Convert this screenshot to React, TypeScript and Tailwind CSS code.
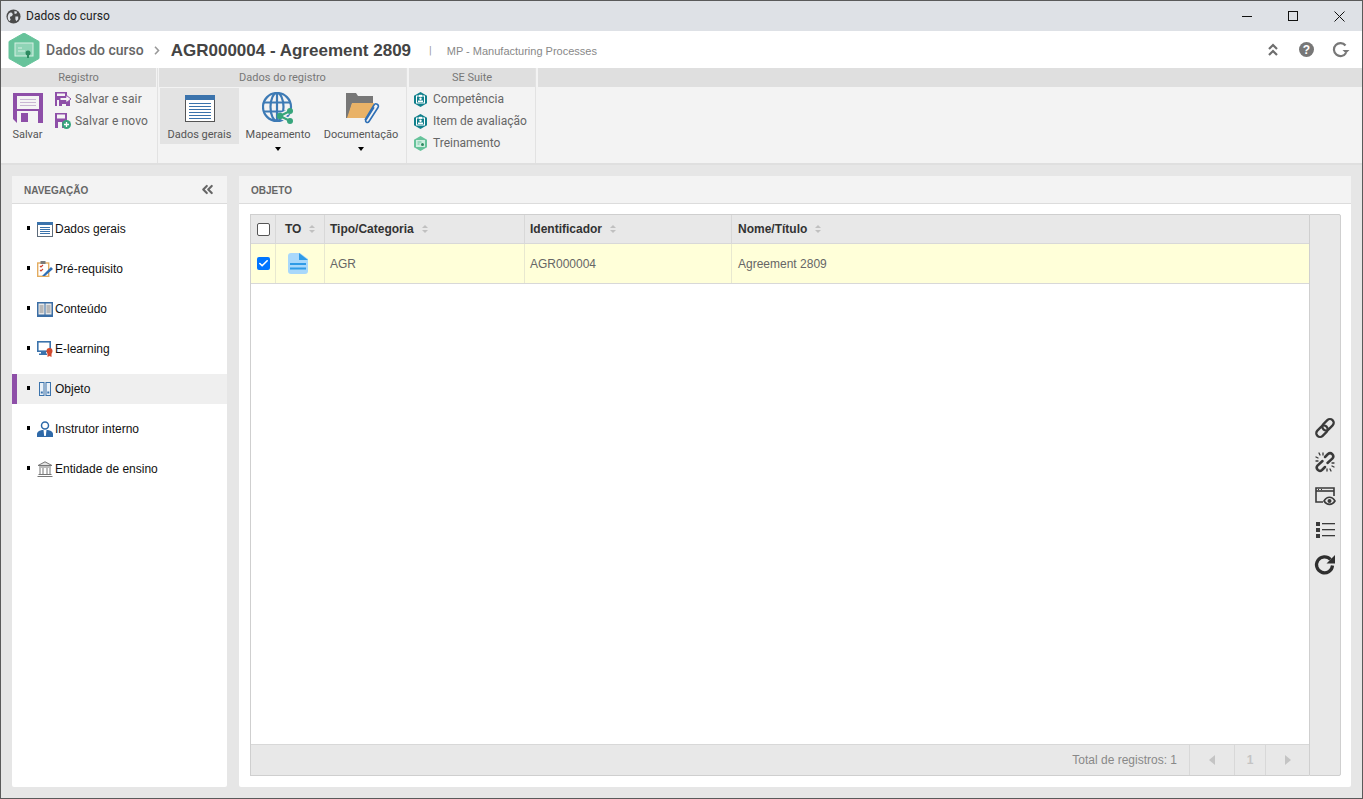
import { Check, ChevronsLeft } from 'lucide-react';
import type { ReactNode } from 'react';

function Hex({ color, children }: { color: string; children?: ReactNode }) {
  return (
    <svg width="15" height="15" viewBox="0 0 15 15" className="shrink-0">
      <path d="M7.5 0 14 3.7v7.6L7.5 15 1 11.300V3.700z" fill={color} />
      {children}
    </svg>
  );
}

function BadgeIcon() {
  return (
    <Hex color="#11808c">
      <rect x="3.500" y="4" width="8" height="7" fill="none" stroke="#fff" strokeWidth="1" />
      <rect x="6" y="2.800" width="3" height="2" fill="#fff" />
      <circle cx="7.500" cy="6.700" r="1.200" fill="#fff" />
      <rect x="5" y="8.500" width="5" height="1.500" fill="#fff" />
    </Hex>
  );
}

function TrainIcon() {
  return (
    <Hex color="#67c39b">
      <rect x="3" y="4" width="9" height="7" fill="#cfeee0" />
      <path d="M4.500 6h4M4.500 8h2" stroke="#67c39b" strokeWidth="1" />
      <circle cx="9.500" cy="8.500" r="1.500" fill="#2d8a60" />
    </Hex>
  );
}

function SaveBig() {
  return (
    <svg width="30" height="30" viewBox="0 0 30 30">
      <path d="M0 0h30v30H4l-4-4z" fill="#8e4fa8" />
      <rect x="4" y="3" width="22" height="13" fill="#f4f4f4" />
      <path d="M7 6.500h16M7 9.500h16M7 12.500h16" stroke="#c9b6d3" strokeWidth="1" />
      <rect x="4" y="18" width="21" height="12" fill="#f4f4f4" />
      <rect x="8" y="20" width="7" height="9" fill="#8e4fa8" />
    </svg>
  );
}

function SaveExit() {
  return (
    <svg width="16" height="16" viewBox="0 0 16 16">
      <path d="M0 1h12v4h-1v3h4v7H0z" fill="#8e4fa8" />
      <rect x="2" y="2.500" width="8" height="2.500" fill="#f4f4f4" />
      <path d="M5 6.500h6V4l5 4-5 4V9.500H5z" fill="#f4f4f4" stroke="#8e4fa8" strokeWidth="1" />
      <path d="M2 9h2v6H2z" fill="#f4f4f4" />
      <path d="M7 13h4v2H7z" fill="#f4f4f4" />
    </svg>
  );
}

function SaveNew() {
  return (
    <svg width="16" height="16" viewBox="0 0 16 16">
      <path d="M0 0h12v9H9v6H0z" fill="#8e4fa8" />
      <rect x="2" y="1.500" width="8" height="4" fill="#f4f4f4" />
      <rect x="3" y="9" width="4" height="6" fill="#f4f4f4" />
      <circle cx="11.500" cy="11.500" r="4.500" fill="#37a57c" />
      <path d="M11.500 9v5M9 11.500h5" stroke="#fff" strokeWidth="1.300" />
    </svg>
  );
}

function WindowBig() {
  return (
    <svg width="30" height="27" viewBox="0 0 30 27" className="mb-[2px]">
      <rect x="0.500" y="0.500" width="29" height="26" fill="#fff" stroke="#555" />
      <rect width="30" height="5" fill="#3b73ac" />
      <path d="M4 8.500h22M4 11.500h22M4 14.500h22M4 17.500h22M4 20.500h22M4 23.500h22" stroke="#3b73ac" strokeWidth="1" />
    </svg>
  );
}

function GlobeShare() {
  return (
    <svg width="32" height="32" viewBox="0 0 32 32" fill="none">
      <circle cx="15" cy="15" r="14" stroke="#3d7ab5" strokeWidth="2.200" />
      <ellipse cx="15" cy="15" rx="6.500" ry="14" stroke="#3d7ab5" strokeWidth="2.200" />
      <path d="M1.500 10.500h27M1.500 19.500h27M15 1v28" stroke="#3d7ab5" strokeWidth="2.200" />
      <path d="M18 24 28 19M18 24l10 5" stroke="#f3f3f3" strokeWidth="5" />
      <path d="M18 24 28 19M18 24l10 5" stroke="#37a57c" strokeWidth="2" />
      <circle cx="18" cy="24" r="3.200" fill="#37a57c" />
      <circle cx="28" cy="19" r="3" fill="#37a57c" />
      <circle cx="28" cy="29" r="3" fill="#37a57c" />
    </svg>
  );
}

function FolderClip() {
  return (
    <svg width="34" height="31" viewBox="0 0 34 31" fill="none" className="ml-[3px]">
      <path d="M0 0h10l2 3h15v8H6L2 25H0z" fill="#777" />
      <path d="M6 10h22l-2 15H1z" fill="#e9b267" />
      <path d="m19 27 9-15c1.500-2.500 5.500-.5 4 2.500l-9 14c-1.200 1.800-4.500.8-3-1.800l8-12.500" fill="#f3f3f3" stroke="#2e6fb5" strokeWidth="1.600" />
    </svg>
  );
}

function CourseLogo() {
  return (
    <svg width="32" height="34" viewBox="0 0 32 34">
      <path d="M16 0 31 8.500v17L16 34 1 25.500v-17z" fill="#67c39b" stroke="#67c39b" strokeLinejoin="round" />
      <rect x="7" y="10" width="18" height="13" fill="#8fd4b6" stroke="#d7f0e4" strokeWidth="1" />
      <path d="M10 18h7M10 15h4" stroke="#d7f0e4" strokeWidth="1" />
      <circle cx="20" cy="20" r="2.500" fill="#2d8a60" />
      <path d="M19 22h2v3h-2z" fill="#2d8a60" />
    </svg>
  );
}

function NavIcon({ name }: { name: string }) {
  if (name === 'Dados gerais') {
    return (
      <svg width="16" height="15" viewBox="0 0 16 15">
        <rect x="0.500" y="0.500" width="15" height="14" fill="#fff" stroke="#5d6b7a" />
        <rect width="16" height="3" fill="#3b73ac" />
        <path d="M3 5.500h10M3 7.500h10M3 9.500h10M3 11.500h10" stroke="#3b73ac" />
      </svg>
    );
  }
  if (name === 'Pré-requisito') {
    return (
      <svg width="16" height="16" viewBox="0 0 16 16" fill="none">
        <rect x="0.700" y="2" width="11" height="13.300" fill="#fff" stroke="#e3ac60" strokeWidth="1.400" />
        <rect x="3.500" y="0" width="5" height="3" fill="#7a7a7a" />
        <path d="m3 5 1 1 2-2M3 9l1 1 2-2" stroke="#d0432f" strokeWidth="1.100" />
        <path d="M5 15 14 6l2 2-8 7z" fill="#2e6fb5" />
      </svg>
    );
  }
  if (name === 'Conteúdo') {
    return (
      <svg width="16" height="15" viewBox="0 0 16 15">
        <rect width="16" height="15" fill="#3b6ea5" />
        <rect x="1.500" y="1.500" width="6" height="11" fill="#e8e8e8" />
        <rect x="8.500" y="1.500" width="6" height="11" fill="#e8e8e8" />
        <path d="M2.500 4h4M2.500 6h4M2.500 8h4M2.500 10h4M9.500 4h4M9.500 6h4M9.500 8h4M9.500 10h4" stroke="#888" strokeWidth="1" />
      </svg>
    );
  }
  if (name === 'E-learning') {
    return (
      <svg width="16" height="16" viewBox="0 0 16 16">
        <rect x="0.800" y="0.800" width="12.400" height="9.400" fill="#fff" stroke="#3b73ac" strokeWidth="1.600" />
        <rect x="4" y="10" width="5" height="3" fill="#3b73ac" />
        <rect x="2" y="12.500" width="8" height="1.500" fill="#3b73ac" />
        <circle cx="12.500" cy="10" r="3" fill="#d1492e" />
        <path d="M10.500 12v4l2-1 2 1v-4z" fill="#d1492e" />
      </svg>
    );
  }
  if (name === 'Objeto') {
    return (
      <svg width="12" height="14" viewBox="0 0 12 14" fill="none">
        <rect x="0.500" y="0.500" width="4.500" height="13" fill="#eaf1f8" stroke="#3b73ac" />
        <rect x="7" y="0.500" width="4.500" height="13" fill="#eaf1f8" stroke="#3b73ac" />
        <rect x="1.800" y="9.500" width="2" height="2" fill="#3b73ac" />
        <rect x="8.300" y="9.500" width="2" height="2" fill="#3b73ac" />
      </svg>
    );
  }
  if (name === 'Instrutor interno') {
    return (
      <svg width="16" height="16" viewBox="0 0 16 16">
        <path d="M0 16v-3c0-2.500 3-3.500 5-4h6c2 .5 5 1.500 5 4v3z" fill="#2e69a8" />
        <circle cx="8" cy="4.500" r="3.500" fill="#fff" stroke="#2e69a8" strokeWidth="1.500" />
        <path d="M6.500 9h3L8.800 15h-1.600z" fill="#fff" />
      </svg>
    );
  }
  return (
    <svg width="16" height="16" viewBox="0 0 16 16" fill="none" stroke="#777">
      <path d="M8 .800 15 4.500H1z" fill="#e5e5e5" />
      <path d="M2 6h12M3 7v6M6 7v6M10 7v6M13 7v6M1.500 13.500h13M.5 15.500h15" />
    </svg>
  );
}

function Caret() {
  return <span className="mx-auto mt-[5px] block h-0 w-0 shrink-0 border-x-[3.500px] border-t-[4px] border-x-transparent border-t-black" />;
}

function RibbonBig({ label, icon, active, caret, width }: { label: string; icon: ReactNode; active?: boolean; caret?: boolean; width: string }) {
  return (
    <div className={`flex h-[56px] flex-col items-center ${width} ${active ? 'bg-[#e3e3e3]' : ''}`}>
      <div className="flex h-[36px] shrink-0 items-end">{icon}</div>
      <div className="mt-[4px] shrink-0 text-[11px] leading-[14px] text-[#555]">{label}</div>
      {caret && <Caret />}
    </div>
  );
}

function RibbonSmall({ label, icon, cls = 'gap-[4px] tracking-[0.15px]' }: { label: string; icon: ReactNode; cls?: string }) {
  return (
    <div className={`flex h-[22px] items-center text-[12px] text-[#666] ${cls}`}>
      {icon}
      <span>{label}</span>
    </div>
  );
}

const NAV = ['Dados gerais', 'Pré-requisito', 'Conteúdo', 'E-learning', 'Objeto', 'Instrutor interno', 'Entidade de ensino'];

function SortArrows() {
  return (
    <span className="ml-[8px] flex flex-col gap-[2px]">
      <span className="h-0 w-0 border-x-[3.500px] border-b-[3px] border-x-transparent border-b-[#c0c0c0]" />
      <span className="h-0 w-0 border-x-[3.500px] border-t-[3px] border-x-transparent border-t-[#c0c0c0]" />
    </span>
  );
}

function HeadCell({ label, width }: { label: string; width: string }) {
  return (
    <div className={`flex items-center border-r border-[#d8d8d8] text-[12px] font-bold text-[#333] ${width}`}>
      {label}
      <SortArrows />
    </div>
  );
}

export default function App() {
  return (
    <div className="flex h-[799px] w-[1363px] flex-col overflow-hidden border border-[#5a5a5a] bg-[#e6e6e6] font-['Roboto',sans-serif]">
      {/* barra do windows */}
      <div className="flex h-[30px] shrink-0 items-center bg-[#dee1e6] pl-[5px]">
        <svg width="15" height="15" viewBox="0 0 16 16">
          <circle cx="8" cy="8" r="7.500" fill="#4a4a4a" />
          <path d="M3 5c2-2 3-1 4 0s-1 3-2 3-1 2 0 3l-1 2C2 12 1 8 3 5zm6-3 3 1-1 2-2 0zm1 6 3 0 0 3-2 2-1-2z" fill="#dee1e6" />
        </svg>
        <span className="ml-[5px] text-[12px] text-[#222]">Dados do curso</span>
        <div className="ml-auto flex items-center">
          <div className="flex w-[46px] justify-center">
            <svg width="10" height="10" viewBox="0 0 10 10"><path d="M0 5.500h10" stroke="#111" strokeWidth="1" /></svg>
          </div>
          <div className="flex w-[46px] justify-center">
            <svg width="10" height="10" viewBox="0 0 10 10"><rect x="0.500" y="0.500" width="9" height="9" fill="none" stroke="#111" strokeWidth="1" /></svg>
          </div>
          <div className="flex w-[46px] justify-center">
            <svg width="11" height="11" viewBox="0 0 11 11"><path d="m.5.500 10 10M10.500.500l-10 10" stroke="#111" strokeWidth="1" /></svg>
          </div>
        </div>
      </div>

      {/* cabecalho */}
      <div className="flex h-[37px] shrink-0 items-center bg-white pl-[7px]">
        <CourseLogo />
        <div className="flex items-center pt-[2px]">
          <span className="ml-[6px] text-[14px] font-medium text-[#666]">Dados do curso</span>
          <svg width="6" height="9" viewBox="0 0 6 9" className="ml-[10px]"><path d="m1 .800 3.500 3.700L1 8.200" fill="none" stroke="#999" strokeWidth="1.600" /></svg>
          <span className="ml-[11px] font-['Liberation_Sans',sans-serif] text-[17px] font-bold text-[#444]">AGR000004 - Agreement 2809</span>
          <span className="ml-[18px] pt-[2px] text-[11px] text-[#999]">|</span>
          <span className="ml-[15px] pt-[2px] font-['Liberation_Sans',sans-serif] text-[11px] text-[#888]">MP - Manufacturing Processes</span>
        </div>
        <div className="ml-auto flex items-center pr-[12px]">
          <svg width="10" height="13" viewBox="0 0 10 13" fill="none" stroke="#6e6e6e" strokeWidth="2.200"><path d="m1 6 4-4 4 4M1 12l4-4 4 4" /></svg>
          <div className="ml-[21px] flex h-[15px] w-[15px] items-center justify-center rounded-full bg-[#777] font-['Liberation_Sans',sans-serif] text-[12px] font-bold text-white">?</div>
          <svg width="18" height="16" viewBox="0 0 18 16" fill="none" className="ml-[18px]">
            <path d="M13.500 3.500A6.500 6.500 0 1 0 14 11" stroke="#777" strokeWidth="2.200" />
            <path d="M10.500 8h7l-3.500 3.500z" fill="#777" />
          </svg>
        </div>
      </div>

      {/* ribbon */}
      <div className="flex h-[97px] shrink-0 border-b-2 border-[#dfdfdf] bg-[#f3f3f3]">
        <div className="flex w-[157px] flex-col border-r border-[#e2e2e2]">
          <div className="mr-px h-[19px] bg-[#dfdfdf] text-center text-[11px] leading-[19px] text-[#777]">Registro</div>
          <div className="flex pl-[9px]">
            <div className="flex w-[35px] flex-col items-center pt-[6px]">
              <SaveBig />
              <span className="mt-[5px] text-[11px] leading-[14px] text-[#555]">Salvar</span>
            </div>
            <div className="ml-[10px] pt-[1px]">
              <RibbonSmall label="Salvar e sair" icon={<SaveExit />} />
              <RibbonSmall label="Salvar e novo" icon={<SaveNew />} />
            </div>
          </div>
        </div>
        <div className="flex w-[249px] flex-col border-r border-[#e2e2e2]">
          <div className="ml-px h-[19px] bg-[#dfdfdf] text-center text-[11px] leading-[19px] text-[#777]">Dados do registro</div>
          <div className="flex pl-[2px] pt-[1px]">
            <RibbonBig label="Dados gerais" active width="w-[79px]" icon={<WindowBig />} />
            <RibbonBig label="Mapeamento" caret width="w-[78px]" icon={<GlobeShare />} />
            <RibbonBig label="Documentação" caret width="w-[88px]" icon={<FolderClip />} />
          </div>
        </div>
        <div className="flex w-[129px] flex-col border-r border-[#e2e2e2]">
          <div className="ml-[2px] h-[19px] bg-[#dfdfdf] text-center text-[11px] leading-[19px] text-[#777]">SE Suite</div>
          <div className="pl-[6px] pt-px">
            <RibbonSmall label="Competência" cls="gap-[5px]" icon={<BadgeIcon />} />
            <RibbonSmall label="Item de avaliação" cls="gap-[5px]" icon={<BadgeIcon />} />
            <RibbonSmall label="Treinamento" cls="gap-[5px]" icon={<TrainIcon />} />
          </div>
        </div>
        <div className="ml-[2px] h-[19px] flex-1 bg-[#dfdfdf]" />
      </div>

      {/* conteudo */}
      <div className="flex min-h-0 flex-1 gap-[12px] pb-[11px] pl-[11px] pr-[11px] pt-[11px]">
        <div className="flex w-[215px] shrink-0 flex-col rounded-[2px] bg-white font-['Liberation_Sans',sans-serif]">
          <div className="flex h-[28px] shrink-0 items-center justify-between border-b border-[#dcdcdc] bg-[#f3f3f3] pl-[12px] pr-[11px]">
            <span className="pt-[1px] text-[10px] font-bold text-[#666]">NAVEGAÇÃO</span>
            <ChevronsLeft size={17} strokeWidth={3} className="text-[#666]" />
          </div>
          <div className="pt-[10px]">
            {NAV.map((n) => (
              <div key={n} className={`mb-[10px] flex h-[30px] items-center text-[12px] text-[#111] ${n === 'Objeto' ? 'border-l-[5px] border-[#8e4fa8] bg-[#efefef] pl-[10px]' : 'pl-[15px]'}`}>
                <span className="mb-[3px] mr-[6px] h-[4px] w-[3px] bg-black" />
                <span className="flex w-[18px] justify-center"><NavIcon name={n} /></span>
                <span className="ml-px">{n}</span>
              </div>
            ))}
          </div>
        </div>

        <div className="flex min-w-0 flex-1 flex-col rounded-[2px] bg-white font-['Liberation_Sans',sans-serif]">
          <div className="flex h-[28px] shrink-0 items-center border-b border-[#dcdcdc] bg-[#f3f3f3] pl-[12px] pt-[1px] text-[10px] font-bold text-[#666]">OBJETO</div>
          <div className="flex min-h-0 flex-1 pb-[11px] pl-[11px] pr-[10px] pt-[10px]">
            <div className="flex min-w-0 flex-1 flex-col border border-r-0 border-[#cfcfcf]">
              <div className="flex h-[29px] shrink-0 border-b border-[#d8d8d8] bg-[#e8e8e8]">
                <div className="flex w-[25px] items-center justify-center border-r border-[#d8d8d8]">
                  <span className="h-[13px] w-[13px] rounded-[2px] border border-[#555] bg-white" />
                </div>
                <HeadCell label="TO" width="w-[49px] pl-[9px]" />
                <HeadCell label="Tipo/Categoria" width="w-[200px] pl-[5px]" />
                <HeadCell label="Identificador" width="w-[207px] pl-[5px]" />
                <HeadCell label="Nome/Título" width="flex-1 border-r-0 pl-[6px]" />
              </div>
              <div className="flex h-[40px] shrink-0 border-b border-[#d8d8d8] bg-[#ffffd9] text-[12px] text-[#666]">
                <div className="flex w-[25px] items-center justify-center border-r border-[#e8e8d0]">
                  <span className="flex h-[13px] w-[13px] items-center justify-center rounded-[2px] bg-[#0075ff]"><Check size={11} strokeWidth={3.500} className="text-white" /></span>
                </div>
                <div className="flex w-[49px] items-center border-r border-[#e8e8d0] pl-[12px]">
                  <svg width="20" height="21" viewBox="0 0 20 21">
                    <path d="M3 0h9l8 6v12a3 3 0 0 1-3 3H3a3 3 0 0 1-3-3V3a3 3 0 0 1 3-3z" fill="#a8d8fb" />
                    <path d="M11 0l9 7h-9z" fill="#2f9be6" />
                    <path d="M2 11h16M2 15.500h16" stroke="#2f9be6" strokeWidth="2" />
                  </svg>
                </div>
                <div className="flex w-[200px] items-center border-r border-[#e8e8d0] pl-[5px]">AGR</div>
                <div className="flex w-[207px] items-center border-r border-[#e8e8d0] pl-[5px]">AGR000004</div>
                <div className="flex flex-1 items-center pl-[6px]">Agreement 2809</div>
              </div>
              <div className="flex-1" />
              <div className="flex h-[31px] shrink-0 items-center justify-end border-t border-[#d8d8d8] bg-[#e8e8e8] text-[12px] text-[#888]">
                <span className="mr-[12px]">Total de registros: 1</span>
                <div className="flex h-full w-[45px] items-center justify-center border-l border-[#d8d8d8]">
                  <span className="h-0 w-0 border-y-[5px] border-r-[6px] border-y-transparent border-r-[#c4c4c4]" />
                </div>
                <div className="flex h-full w-[31px] items-center justify-center border-l border-[#d8d8d8] font-bold text-[#c4c4c4]">1</div>
                <div className="flex h-full w-[44px] items-center justify-center border-l border-[#d8d8d8]">
                  <span className="h-0 w-0 border-y-[5px] border-l-[6px] border-y-transparent border-l-[#c4c4c4]" />
                </div>
              </div>
            </div>
            <div className="flex w-[32px] shrink-0 flex-col items-center justify-end rounded-r-[2px] border border-[#cfcfcf] bg-[#e8e8e8] pb-[194px]">
              <div className="flex h-[34px] items-center">
                <svg width="24" height="24" viewBox="0 0 24 24" fill="none" stroke="#3a3a3a" strokeWidth="2.300">
                  <rect x="2.500" y="11.500" width="13" height="7.500" rx="3.700" transform="rotate(-45 9 15.250)" />
                  <rect x="8.500" y="5" width="13" height="7.500" rx="3.700" transform="rotate(-45 15 8.750)" />
                </svg>
              </div>
              <div className="flex h-[34px] items-center">
                <svg width="24" height="24" viewBox="0 0 24 24" fill="none" stroke="#3a3a3a" strokeWidth="2.500" strokeLinecap="round">
                  <path d="m14.500 13 5-4.500a3.200 3.200 0 0 0-4.500-4.500l-3 3" />
                  <path d="M9.500 11 4.500 15.500a3.200 3.200 0 0 0 4.500 4.500l3-3" />
                  <path d="M6 3l1 2M3 7l2 1M18 21l-1-2M21 17l-2-1M10 3v2M21 13h-2M3 11h2M14 21v-2" strokeWidth="1.300" />
                </svg>
              </div>
              <div className="flex h-[34px] items-center">
                <svg width="22" height="22" viewBox="0 0 22 22" fill="none" stroke="#3a3a3a" strokeWidth="1.600" className="mb-[3px]">
                  <path d="M9 18H2V4h18v8" />
                  <path d="M2 7h18" />
                  <path d="M4 5.500h1M7 5.500h1" strokeWidth="1" />
                  <path d="M10 17c3-5 8-5 11 0-3 4.500-8 4.500-11 0z" fill="#e8e8e8" />
                  <circle cx="15.500" cy="17" r="2" fill="#3a3a3a" stroke="none" />
                </svg>
              </div>
              <div className="flex h-[34px] items-center">
                <svg width="22" height="22" viewBox="0 0 22 22" fill="#3a3a3a">
                  <rect x="2" y="3" width="4" height="4" /><rect x="2" y="9" width="4" height="4" /><rect x="2" y="15" width="4" height="4" />
                  <rect x="8" y="4" width="13" height="1.300" /><rect x="8" y="10" width="13" height="1.300" /><rect x="8" y="16" width="13" height="1.300" />
                </svg>
              </div>
              <div className="flex h-[34px] items-center">
                <svg width="24" height="24" viewBox="0 0 24 24" fill="none">
                  <path d="M17.500 7.500a8 8 0 1 0 2 6" stroke="#2f2f2f" strokeWidth="3.200" />
                  <path d="M13.500 11.500H22V3z" fill="#2f2f2f" />
                </svg>
              </div>
            </div>
          </div>
        </div>
      </div>
    </div>
  );
}
